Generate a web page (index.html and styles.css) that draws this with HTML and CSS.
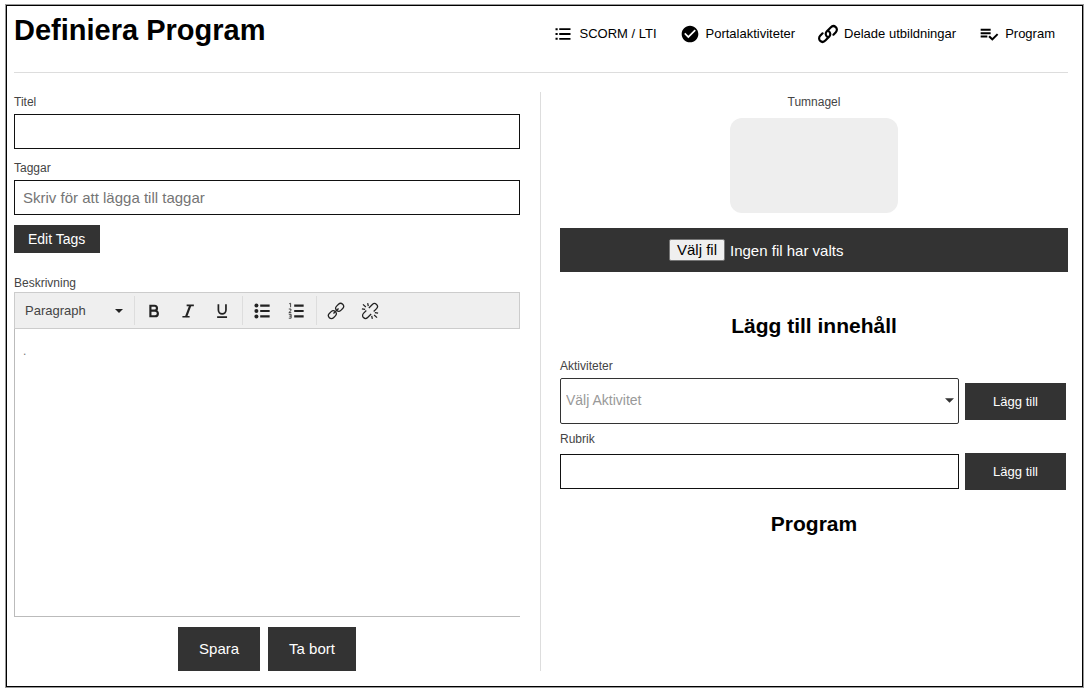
FILE: index.html
```html
<!DOCTYPE html>
<html lang="sv">
<head>
<meta charset="utf-8">
<title>Definiera Program</title>
<link rel="stylesheet" href="styles.css">
</head>
<body>
<div class="frame">
  <header class="page-header">
    <h1 class="page-title">Definiera Program</h1>
    <nav class="nav">
      <a class="nav-link" href="#scorm">
        <svg class="nav-icon" viewBox="0 0 24 24" aria-hidden="true"><path d="M3 5h2.6v2.4H3zM3 10.8h2.6v2.4H3zM3 16.6h2.6V19H3zM7.5 5H21v2.2H7.5zM7.5 10.9H21v2.2H7.5zM7.5 16.8H21V19H7.5z"/></svg>
        SCORM / LTI
      </a>
      <a class="nav-link" href="#portal">
        <svg class="nav-icon" viewBox="0 0 24 24" aria-hidden="true"><path d="M12 2C6.48 2 2 6.48 2 12s4.48 10 10 10 10-4.48 10-10S17.52 2 12 2zm-2 15l-5-5 1.41-1.41L10 14.17l7.59-7.59L19 8l-9 9z"/></svg>
        Portalaktiviteter
      </a>
      <a class="nav-link" href="#delade">
        <svg class="nav-icon nav-icon-line" viewBox="0 0 24 24" aria-hidden="true"><path d="M11.2 15.4c-2.2-1.5-2.6-4.4-.8-6.3l4.8-5c1.8-1.9 4.4-1.9 6.1-.4 1.8 1.6 1.8 4.3.1 6.1l-2.9 3"/><path d="M12.8 8.6c2.2 1.5 2.6 4.4.8 6.3l-4.8 5c-1.8 1.9-4.4 1.9-6.1.4-1.8-1.6-1.8-4.3-.1-6.1l2.9-3"/></svg>
        Delade utbildningar
      </a>
      <a class="nav-link" href="#program">
        <svg class="nav-icon" viewBox="0 0 24 24" aria-hidden="true"><path d="M14 9.8H2v2.4h12V9.8zm0-4.2H2V8h12V5.6zM2 16.2h8v-2.4H2v2.4zm19.5-4.9L23.2 13l-7.2 7.2-4.8-4.7L13 13.8l3 3 5.5-5.5z"/></svg>
        Program
      </a>
    </nav>
  </header>

  <main class="columns">
    <form class="column column-left">
      <label class="label" for="title">Titel</label>
      <input class="text-input" id="title" type="text">

      <label class="label label-next" for="tags">Taggar</label>
      <input class="text-input" id="tags" type="text" placeholder="Skriv för att lägga till taggar">
      <button class="button button-small" type="button">Edit Tags</button>

      <label class="label label-editor" for="description">Beskrivning</label>
      <div class="editor">
        <div class="toolbar">
          <div class="format">
            <select class="format-select" aria-label="Format"><option>Paragraph</option></select>
            <svg class="format-arrow" viewBox="0 0 8 4" aria-hidden="true"><path d="M0 0h8L4 4z"/></svg>
          </div>
          <div class="tools">
            <button class="tool" type="button" aria-label="Fet">
              <svg class="tool-icon" viewBox="0 0 20 20" aria-hidden="true"><path class="stroke-bold" d="M6 3v14M6 4.2h4.600a2.700 2.700 0 0 1 0 5.400H6M6 9.600h5.200a3.100 3.100 0 0 1 0 6.200H6"/></svg>
            </button>
            <button class="tool" type="button" aria-label="Kursiv">
              <svg class="tool-icon" viewBox="0 0 20 20" aria-hidden="true"><path class="stroke-mid" d="M8.500 3.800h8M3.800 16.400h8"/><path class="stroke-bold" d="M12.600 3.800L7.800 16.400"/></svg>
            </button>
            <button class="tool" type="button" aria-label="Understruken">
              <svg class="tool-icon" viewBox="0 0 20 20" aria-hidden="true"><path class="stroke-mid" d="M6 2.500v6.500a4.200 4.200 0 0 0 8.400 0V2.500M4.600 16.800h11"/></svg>
            </button>
          </div>
          <div class="tools">
            <button class="tool" type="button" aria-label="Punktlista">
              <svg class="tool-icon" viewBox="0 0 20 20" aria-hidden="true"><circle cx="3.800" cy="4" r="2.200"/><circle cx="3.800" cy="10" r="2.200"/><circle cx="3.800" cy="16" r="2.200"/><path class="stroke-list" d="M8 4h10.500M8 10h10.500M8 16h10.500"/></svg>
            </button>
            <button class="tool" type="button" aria-label="Numrerad lista">
              <svg class="tool-icon" viewBox="0 0 20 20" aria-hidden="true"><path class="stroke-list" d="M8 4h10.500M8 10h10.500M8 16h10.500"/><path class="stroke-fine" d="M2.400 2l1.600-.6v4.400M2 7.800h2.400v1.700L2 11.800h2.800M2 13.700h2.600v2H2.600M4.600 15.700v2.300H2"/></svg>
            </button>
          </div>
          <div class="tools">
            <button class="tool" type="button" aria-label="Infoga länk">
              <svg class="tool-icon" viewBox="0 0 20 20" aria-hidden="true"><g class="stroke-thin" transform="rotate(-45 10 10)"><rect x="-0.500" y="6.700" width="9.500" height="6.600" rx="3.300"/><rect x="11" y="6.700" width="9.500" height="6.600" rx="3.300"/><path d="M6 10h8"/></g></svg>
            </button>
            <button class="tool" type="button" aria-label="Ta bort länk">
              <svg class="tool-icon" viewBox="0 0 20 20" aria-hidden="true"><g class="stroke-thin"><g transform="rotate(-45 10 10)"><path d="M7.500 6.700H3a3.300 3.300 0 0 0 0 6.600h5.500M12.500 13.300H17a3.300 3.300 0 0 0 0-6.600h-5.500"/></g><path d="M7.400 1.200l.7 3.400M2.200 2.600l3.200 3M1 7.600l3.600.7M12.600 18.800l-.7-3.400M17.800 17.400l-3.200-3M19 12.400l-3.600-.7"/></g></svg>
            </button>
          </div>
        </div>
        <textarea class="editor-body" id="description">.</textarea>
      </div>

      <div class="actions">
        <button class="button button-large" type="button">Spara</button>
        <button class="button button-large" type="button">Ta bort</button>
      </div>
    </form>

    <form class="column column-right">
      <label class="label label-center" for="thumbnail">Tumnagel</label>
      <div class="thumbnail"></div>
      <label class="file-bar">
        <input class="file-input" id="thumbnail" type="file">
        <span class="file-content">
          <span class="file-button">Välj fil</span>
          <span class="file-status">Ingen fil har valts</span>
        </span>
      </label>

      <h2 class="heading">Lägg till innehåll</h2>

      <label class="label" for="activity">Aktiviteter</label>
      <div class="row">
        <div class="activity">
          <select class="activity-select" id="activity"><option>Välj Aktivitet</option></select>
          <svg class="activity-arrow" viewBox="0 0 8 4" aria-hidden="true"><path d="M0 0h8L4 4z"/></svg>
        </div>
        <button class="button button-add" type="button">Lägg till</button>
      </div>

      <label class="label label-rubrik" for="rubrik">Rubrik</label>
      <div class="row">
        <input class="text-input" id="rubrik" type="text">
        <button class="button button-add" type="button">Lägg till</button>
      </div>

      <h2 class="heading heading-program">Program</h2>
    </form>
  </main>
</div>
</body>
</html>
```

FILE: styles.css
```css
* {
  box-sizing: border-box;
}

body {
  display: flex;
  min-height: 100vh;
  margin: 0;
  padding: 5px 6px 7px;
  background: #fff;
  color: #000;
  font-family: "Liberation Sans", Arial, sans-serif;
}

button,
input,
select,
textarea {
  margin: 0;
  font-family: inherit;
}

.frame {
  display: flex;
  flex: 1;
  flex-direction: column;
  padding: 0 14px 15px 7px;
  border: 1px solid #000;
  box-shadow: 0 0 0 1px #999;
}

.page-header {
  display: flex;
  align-items: flex-start;
  justify-content: space-between;
  height: 67px;
  padding: 8px 13px 0 0;
  border-bottom: 1px solid #ddd;
}

.page-title {
  margin: 0;
  font-size: 29px;
  line-height: 32px;
}

.nav {
  display: flex;
  gap: 23px;
  padding-top: 10px;
}

.nav-link {
  display: flex;
  align-items: center;
  gap: 6px;
  color: #000;
  font-size: 13px;
  line-height: 20px;
  text-decoration: none;
  white-space: nowrap;
}

.nav-icon {
  width: 20px;
  height: 20px;
}

.nav-icon-line {
  fill: none;
  stroke: #000;
  stroke-width: 2.6;
  stroke-linecap: round;
}

.columns {
  display: grid;
  flex: 1;
  grid-template-columns: 1fr 1fr;
  margin-top: 19px;
}

.column {
  display: flex;
  flex-direction: column;
  min-width: 0;
}

.column-left {
  padding-right: 20px;
  border-right: 1px solid #ddd;
}

.column-right {
  padding-left: 19px;
}

.label {
  margin: 3px 0 4px;
  color: #444;
  font-size: 12px;
  line-height: 15px;
}

.label-next {
  margin-top: 12px;
}

.label-editor {
  margin: 23px 0 1px;
}

.label-center {
  align-self: center;
  margin-bottom: 8px;
}

.label-rubrik {
  margin: 8px 0 6px;
}

.text-input {
  flex: none;
  width: 100%;
  height: 35px;
  padding: 0 8px;
  border: 1px solid #111;
  border-radius: 0;
  color: #222;
  font-size: 15px;
}

.text-input::placeholder {
  color: #757575;
}

.button {
  border: 0;
  background: #333;
  color: #fff;
}

.button-small {
  align-self: flex-start;
  height: 28px;
  margin-top: 10px;
  padding: 0 15px 0 14px;
  font-size: 14px;
}

.button-large {
  height: 44px;
  padding: 0 21px 2px;
  font-size: 15px;
}

.button-add {
  flex: none;
  width: 101px;
  height: 37px;
  font-size: 13px;
}

.editor {
  display: flex;
  flex: 1;
  flex-direction: column;
}

.toolbar {
  display: flex;
  align-items: center;
  height: 37px;
  border: 1px solid #ccc;
  background: #efefef;
}

.format {
  position: relative;
  width: 119px;
}

.format-select {
  width: 100%;
  height: 29px;
  padding: 0 24px 0 10px;
  border: 0;
  background: transparent;
  color: #444;
  font-size: 13px;
  appearance: none;
}

.format-arrow {
  position: absolute;
  top: 13px;
  right: 11px;
  width: 8px;
  height: 4px;
  fill: #222;
  pointer-events: none;
}

.tools {
  display: flex;
  padding: 0 3px 0 2px;
  border-left: 1px solid #ddd;
}

.tool {
  display: flex;
  align-items: center;
  justify-content: center;
  width: 34px;
  height: 29px;
  padding: 0;
  border: 0;
  background: transparent;
}

.tool-icon {
  width: 18px;
  height: 18px;
  fill: #222;
  stroke: #222;
  stroke-width: 0;
}

.stroke-bold {
  fill: none;
  stroke-width: 2.4;
}

.stroke-list {
  fill: none;
  stroke-width: 2.3;
}

.stroke-mid {
  fill: none;
  stroke-width: 1.9;
}

.stroke-thin {
  fill: none;
  stroke-width: 1.4;
}

.stroke-fine {
  fill: none;
  stroke-width: 0.9;
}

.editor-body {
  flex: 1;
  width: 100%;
  min-height: 120px;
  padding: 14px 8px;
  border: 1px solid #bbb;
  border-width: 0 0 1px 1px;
  color: #777;
  font-size: 12px;
  line-height: 16px;
  resize: none;
}

.actions {
  display: flex;
  justify-content: center;
  gap: 8px;
  margin-top: 10px;
}

.thumbnail {
  align-self: center;
  width: 168px;
  height: 95px;
  border-radius: 12px;
  background: #eee;
}

.file-bar {
  display: flex;
  align-items: center;
  justify-content: center;
  height: 44px;
  margin-top: 15px;
  background: #333;
  color: #fff;
  font-size: 15px;
}

.file-input {
  position: absolute;
  width: 1px;
  height: 1px;
  opacity: 0;
}

.file-content {
  display: flex;
  align-items: center;
  gap: 5px;
  width: 290px;
}

.file-button {
  padding: 0 7px;
  border: 1px solid #767676;
  border-radius: 2px;
  background: #efefef;
  color: #000;
  line-height: 20px;
}

.heading {
  margin: 42px 0 18px;
  font-size: 21px;
  line-height: 24px;
  text-align: center;
}

.heading-program {
  margin: 22px 0 0;
}

.row {
  display: flex;
  align-items: center;
  gap: 6px;
  padding-right: 2px;
}

.activity {
  position: relative;
  flex: 1;
}

.activity-select {
  display: block;
  width: 100%;
  height: 46px;
  padding: 0 24px 3px 5px;
  border: 1px solid #333;
  border-radius: 2px;
  background: #fff;
  color: #999;
  font-size: 14px;
  appearance: none;
}

.activity-arrow {
  position: absolute;
  top: 20px;
  right: 5px;
  width: 9px;
  height: 5px;
  fill: #333;
  pointer-events: none;
}

.row .text-input {
  flex: 1;
  width: auto;
  min-width: 0;
}
```
